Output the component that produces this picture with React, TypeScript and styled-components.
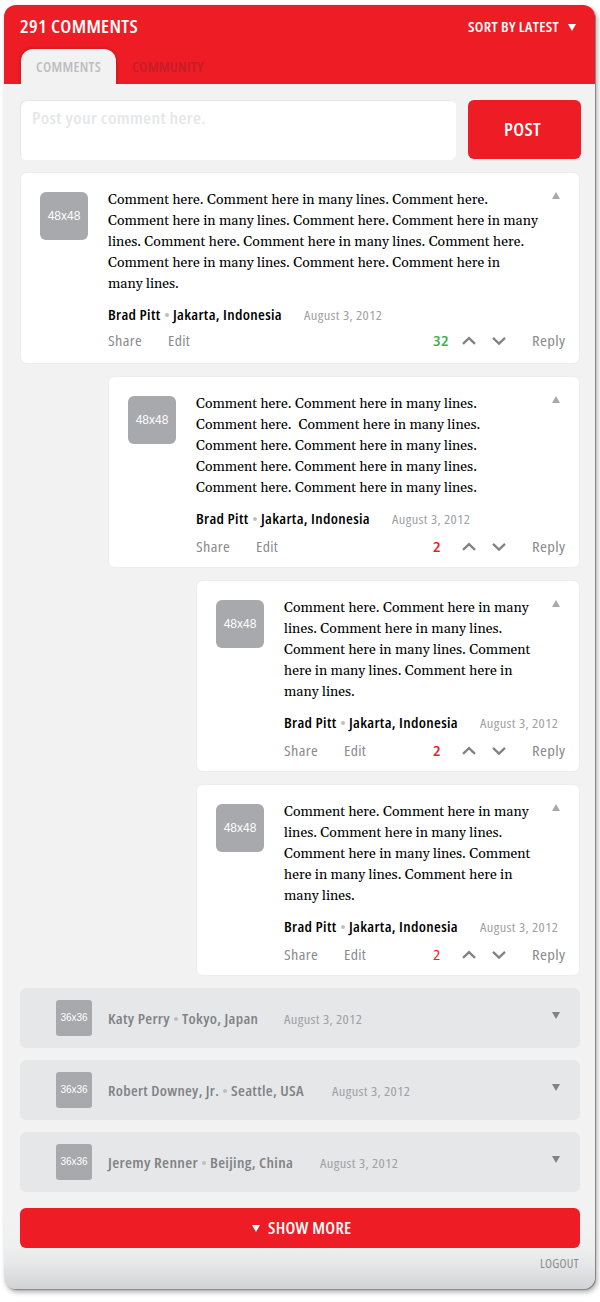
import React from 'react';
import styled, { createGlobalStyle } from 'styled-components';

const RED = '#ee1c25';
const SANS = '"Open Sans", "Noto Sans", sans-serif';

const GlobalStyle = createGlobalStyle`
  *, *::before, *::after { box-sizing: border-box; }
  body { margin: 0; background: #fff; }
  button { border: 0; padding: 0; background: none; cursor: pointer; }
`;

const Page = styled.div`
  width: 600px;
  height: 1302px;
  padding: 5px 5px 0 4px;
  font-family: ${SANS};
  font-stretch: 75%;
`;

const Label = styled.span<{ $w: number; $x: number }>`
  display: block;
  flex: none;
  width: ${p => p.$w}px;
  transform: scaleX(${p => p.$x});
  transform-origin: left center;
  text-align: left;
  white-space: nowrap;
  letter-spacing: 0.3px;
`;

const Panel = styled.main`
  height: 1284px;
  display: flex;
  flex-direction: column;
  border-radius: 12px;
  overflow: hidden;
  background: linear-gradient(#f2f2f2 1210px, #eef0ef 1243px, #e6e8e9 1258px, #d1d3d5 1284px);
  box-shadow: 1px 1px 0 #85878a, 2px 3px 5px rgba(0, 0, 0, 0.35);
`;

const Header = styled.header`
  height: 79px;
  flex: none;
  display: flex;
  flex-direction: column;
  justify-content: space-between;
  background: ${RED};
`;

const TitleRow = styled.div`
  display: flex;
  justify-content: space-between;
  align-items: center;
  height: 44px;
  padding: 0 19px 0 16px;
  color: #fff;
`;

const Title = styled.h1`
  margin: 0;
  font-size: 18px;
  font-weight: 600;
  line-height: 24px;
  padding-bottom: 3px;
`;

const Sort = styled.button`
  display: flex;
  align-items: center;
  gap: 9px;
  color: #fff;
  font: 600 14px/20px ${SANS};
  font-stretch: 75%;
`;

const Tabs = styled.nav`
  display: flex;
  padding-left: 17px;
`;

const Tab = styled.a<{ $active?: boolean }>`
  width: ${p => (p.$active ? 95 : 104)}px;
  height: 35px;
  padding-left: ${p => (p.$active ? 15 : 16)}px;
  border-radius: 12px 12px 0 0;
  background: ${p => (p.$active ? '#f2f2f2' : 'none')};
  box-shadow: ${p => (p.$active ? '0 0 4px rgba(0, 0, 0, 0.22)' : 'none')};
  color: ${p => (p.$active ? '#bcbec0' : '#c41e2b')};
  font-size: 14px;
  font-weight: 600;
  line-height: 35px;
  clip-path: inset(-4px -6px 0 -6px);
`;

const Body = styled.div`
  display: flex;
  flex-direction: column;
  gap: 12px;
  padding: 16px 14px 0 16px;
`;

const Composer = styled.form`
  display: flex;
  height: 60px;
  gap: 12px;
`;

const Input = styled.div`
  width: 436px;
  padding: 5px 0 0 12px;
  border-radius: 6px;
  background: #fff;
  box-shadow: inset 1px 1px 1px #e4e5e6;
  color: #e6e7e8;
  font-size: 16px;
  font-weight: 600;
  line-height: 26px;
`;

const PostButton = styled.button`
  display: flex;
  justify-content: center;
  width: 113px;
  height: 59px;
  padding-right: 4px;
  border-radius: 6px;
  background: ${RED};
  color: #fff;
  font: 600 18px/59px ${SANS};
  font-stretch: 75%;
`;

const Card = styled.article<{ $depth: number }>`
  display: flex;
  gap: 20px;
  height: 192px;
  margin: 0 1px 0 ${p => p.$depth * 88}px;
  padding: 16px 14px 0 19px;
  border: 1px solid #ededee;
  border-radius: 7px;
  background: #fff;
`;

const Avatar = styled.div<{ $size: number }>`
  flex: none;
  width: ${p => p.$size}px;
  height: ${p => p.$size}px;
  margin-top: ${p => (p.$size === 48 ? 3 : 0)}px;
  border-radius: ${p => (p.$size === 48 ? 6 : 3)}px;
  background: #a7a9ac;
  color: #fff;
  font-family: "Liberation Sans", Arial, sans-serif;
  font-size: ${p => (p.$size === 48 ? 12 : 10)}px;
  line-height: ${p => p.$size}px;
  text-align: center;
`;

const Content = styled.div`
  flex: 1;
  min-width: 0;
`;

const TextRow = styled.div`
  display: flex;
  justify-content: space-between;
  padding-right: 5px;
`;

const Text = styled.p`
  margin: 0;
  padding-top: 1px;
  font-family: Gelasio, Georgia, "Liberation Serif", serif;
  font-size: 14px;
  font-stretch: 100%;
  line-height: 21px;
  white-space: pre;
  color: #000;
`;

const Toggle = styled.button`
  display: block;
  width: 8px;
  height: 7px;
  margin: 3px 0 0 -8px;
`;

const Meta = styled.div<{ $muted?: boolean }>`
  display: flex;
  align-items: center;
  height: 20px;
  margin-top: 10px;
  color: ${p => (p.$muted ? '#808285' : '#000')};
  font-size: 14px;
  font-weight: 600;
  line-height: 20px;
`;

const Dot = styled.i`
  width: 4px;
  height: 4px;
  margin: 0 4px;
  border-radius: 50%;
  background: #bcbec0;
`;

const DateText = styled.time<{ $gap: number }>`
  margin-left: ${p => p.$gap}px;
  padding-top: 1px;
  color: #9fa1a4;
  font-size: 12px;
  font-weight: 500;
`;

const Actions = styled.div<{ $top: number }>`
  display: flex;
  align-items: center;
  height: 20px;
  margin-top: ${p => p.$top}px;
  color: #898b8e;
  font-size: 14px;
  font-weight: 500;
  line-height: 20px;
`;

const Share = styled.a`
  width: 60px;
`;

const Votes = styled.div`
  display: flex;
  align-items: center;
  gap: 16px;
  margin: 0 26px 0 auto;
`;

const Count = styled.span<{ $positive?: boolean; $light?: boolean }>`
  width: 13px;
  color: ${p => (p.$positive ? '#39b54a' : RED)};
  font-weight: ${p => (p.$light ? 400 : 600)};
`;

const Collapsed = styled.article`
  display: flex;
  gap: 16px;
  height: 60px;
  margin-right: 1px;
  padding: 12px 20px 0 36px;
  border-radius: 6px;
  background: #e6e7e8;

  ${Meta} { flex: 1; margin-top: 9px; }
  ${Toggle} { margin: 12px 0 0; }
`;

const ShowMore = styled.button`
  display: flex;
  justify-content: center;
  align-items: center;
  gap: 8px;
  height: 40px;
  margin: 4px 1px 0 0;
  padding-left: 3px;
  border-radius: 6px;
  background: ${RED};
  color: #fff;
  font: 600 16px/40px ${SANS};
  font-stretch: 75%;
`;

const Logout = styled.a`
  align-self: flex-end;
  margin: -6px 3px 0 0;
  color: #898b8e;
  font-size: 12px;
  font-weight: 500;
  line-height: 20px;
`;

const Icon = styled.svg`
  display: block;
  flex: none;
`;

const Triangle = ({ up, color }: { up?: boolean; color: string }) => (
  <Icon width="8" height="7" viewBox="0 0 8 7">
    <path d={up ? 'M0 7L4 0L8 7Z' : 'M0 0H8L4 7Z'} fill={color} />
  </Icon>
);

const Chevron = ({ up }: { up?: boolean }) => (
  <Icon width="14" height="10" viewBox="0 0 14 10">
    <path d={up ? 'M1 7.8L7 2.1L13 7.8' : 'M1 1.9L7 7.6L13 1.9'} fill="none" stroke="#808285" strokeWidth="2.3" />
  </Icon>
);

type Comment = { depth: number; lines: string[]; votes: number; positive?: boolean; light?: boolean };

const narrow = [
  'Comment here. Comment here in many',
  'lines. Comment here in many lines.',
  'Comment here in many lines. Comment',
  'here in many lines. Comment here in',
  'many lines.',
];

const comments: Comment[] = [
  {
    depth: 0,
    votes: 32,
    positive: true,
    lines: [
      'Comment here. Comment here in many lines. Comment here.',
      'Comment here in many lines. Comment here. Comment here in many',
      'lines. Comment here. Comment here in many lines. Comment here.',
      'Comment here in many lines. Comment here. Comment here in',
      'many lines.',
    ],
  },
  {
    depth: 1,
    votes: 2,
    lines: [
      'Comment here. Comment here in many lines.',
      'Comment here.  Comment here in many lines.',
      'Comment here. Comment here in many lines.',
      'Comment here. Comment here in many lines.',
      'Comment here. Comment here in many lines.',
    ],
  },
  { depth: 2, votes: 2, lines: narrow },
  { depth: 2, votes: 2, light: true, lines: narrow },
];

const collapsed = [
  { name: 'Katy Perry', nameW: 62, nameX: 1.12, place: 'Tokyo, Japan', placeW: 76, placeX: 1.108, gap: 26 },
  { name: 'Robert Downey, Jr.', nameW: 111, nameX: 1.1, place: 'Seattle, USA', placeW: 73, placeX: 1.12, gap: 28 },
  { name: 'Jeremy Renner', nameW: 90, nameX: 1.14, place: 'Beijing, China', placeW: 83, placeX: 1.12, gap: 27 },
];

const CommentDate = ({ gap }: { gap: number }) => (
  <DateText $gap={gap}><Label $w={78} $x={1.21}>August 3, 2012</Label></DateText>
);

const CommentCard = ({ depth, lines, votes, positive, light }: Comment) => (
  <Card $depth={depth}>
    <Avatar $size={48}>48x48</Avatar>
    <Content>
      <TextRow>
        <Text>{lines.join('\n')}</Text>
        <Toggle aria-label="Collapse"><Triangle up color="#a7a9ac" /></Toggle>
      </TextRow>
      <Meta>
        <Label $w={52.5} $x={1.11}>Brad Pitt</Label>
        <Dot />
        <Label $w={109} $x={1.113}>Jakarta, Indonesia</Label>
        <CommentDate gap={22} />
      </Meta>
      <Actions $top={depth === 0 ? 6 : 8}>
        <Share><Label $w={34} $x={1.16}>Share</Label></Share>
        <Label as="a" $w={22} $x={1.13}>Edit</Label>
        <Votes>
          <Count $positive={positive} $light={light}><Label $w={13} $x={1.22}>{votes}</Label></Count>
          <Chevron up />
          <Chevron />
        </Votes>
        <Label as="a" $w={33} $x={1.19}>Reply</Label>
      </Actions>
    </Content>
  </Card>
);

export default function App() {
  return (
    <Page>
      <GlobalStyle />
      <Panel>
        <Header>
          <TitleRow>
            <Title><Label $w={118} $x={1.08}>291 COMMENTS</Label></Title>
            <Sort><Label $w={91} $x={1.086}>SORT BY LATEST</Label> <Triangle color="#fff" /></Sort>
          </TitleRow>
          <Tabs>
            <Tab $active><Label $w={65} $x={1.03}>COMMENTS</Label></Tab>
            <Tab><Label $w={72} $x={1.04}>COMMUNITY</Label></Tab>
          </Tabs>
        </Header>
        <Body>
          <Composer>
            <Input><Label $w={174} $x={1.135}>Post your comment here.</Label></Input>
            <PostButton type="button"><Label $w={37} $x={1.066}>POST</Label></PostButton>
          </Composer>
          {comments.map((c, i) => <CommentCard key={i} {...c} />)}
          {collapsed.map(c => (
            <Collapsed key={c.name}>
              <Avatar $size={36}>36x36</Avatar>
              <Meta $muted>
                <Label $w={c.nameW} $x={c.nameX}>{c.name}</Label>
                <Dot />
                <Label $w={c.placeW} $x={c.placeX}>{c.place}</Label>
                <CommentDate gap={c.gap} />
              </Meta>
              <Toggle aria-label="Expand"><Triangle color="#808285" /></Toggle>
            </Collapsed>
          ))}
          <ShowMore><Triangle color="#fff" /> <Label $w={83.5} $x={1.076}>SHOW MORE</Label></ShowMore>
          <Logout><Label $w={38} $x={1.063}>LOGOUT</Label></Logout>
        </Body>
      </Panel>
    </Page>
  );
}
